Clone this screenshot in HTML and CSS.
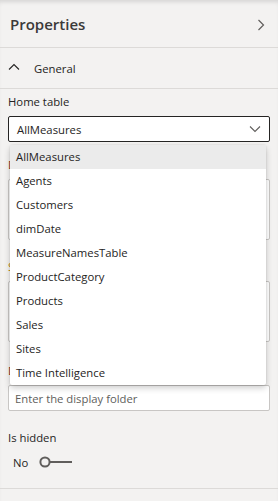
FILE: index.html
```html
<!DOCTYPE html>
<html lang="en">
  <head>
    <meta charset="UTF-8" />
    <title>Properties</title>
    <link rel="stylesheet" href="styles.css">
  </head>
  <body>
    <div class="panel">
      <div class="panel-header">
        <h2>Properties</h2>
        <svg class="chev-right" width="8" height="12" viewBox="0 0 8 12">
          <path d="M1.5 1 L6.5 6 L1.5 11" fill="none" stroke="#605e5c" stroke-width="1.2" />
        </svg>
      </div>

      <div class="section-head">
        <svg class="chev-up" width="12" height="8" viewBox="0 0 12 8">
          <path d="M1 6.5 L6 1.5 L11 6.5" fill="none" stroke="#252423" stroke-width="1.1" />
        </svg>
        <span>General</span>
      </div>

      <div class="fields">
        <div class="field home">
          <label>Home table</label>
          <div class="select">
            <span>AllMeasures</span>
            <svg width="12" height="8" viewBox="0 0 12 8">
              <path d="M1 1.5 L6 6.5 L11 1.5" fill="none" stroke="#605e5c" stroke-width="1.1" />
            </svg>
          </div>

          <ul class="dropdown">
            <li class="selected">AllMeasures</li>
            <li>Agents</li>
            <li>Customers</li>
            <li>dimDate</li>
            <li>MeasureNamesTable</li>
            <li>ProductCategory</li>
            <li>Products</li>
            <li>Sales</li>
            <li>Sites</li>
            <li>Time Intelligence</li>
          </ul>
        </div>

        <div class="field">
          <label class="warn">Description</label>
          <div class="textarea"></div>
        </div>

        <div class="field synonyms">
          <label class="warn2">Synonyms</label>
          <div class="textarea"></div>
        </div>

        <div class="field">
          <label class="warn">Display folder</label>
          <div class="input">Enter the display folder</div>
        </div>

        <div class="field">
          <label>Is hidden</label>
          <div class="toggle-row">
            <span>No</span>
            <svg width="36" height="14" viewBox="0 0 36 14">
              <circle cx="6" cy="7" r="4.6" fill="none" stroke="#605e5c" stroke-width="2" />
              <line x1="10.5" y1="7" x2="33" y2="7" stroke="#605e5c" stroke-width="2" />
            </svg>
          </div>
        </div>
      </div>
      <div class="bottom-line"></div>
    </div>
  </body>
</html>
```

FILE: styles.css
```css
body {
  margin: 0;
  padding: 0;
  background-color: #f3f2f1;
  font-family: "Open Sans", "Noto Sans", sans-serif;
  color: #252423;
}
.panel {
  width: 278px;
  height: 501px;
  box-shadow: inset 0 4px 4px -2px rgba(0, 0, 0, 0.12);
  overflow: hidden;
}
.panel-header {
  display: flex;
  align-items: center;
  justify-content: space-between;
  padding: 0 13px 0 10px;
  border-bottom: 1px solid #dcdad8;
  box-sizing: border-box;
  height: 48px;
}
.panel-header h2 {
  margin: 0;
  font-size: 15px;
  font-weight: 600;
  color: #3b3a39;
  padding-top: 1px;
}
.chev-right {
  margin-top: 2px;
}
.section-head {
  height: 41px;
  display: flex;
  align-items: center;
  gap: 14px;
  padding-left: 8px;
  font-size: 11.3px;
  border-bottom: 1px solid #dcdad8;
  box-sizing: border-box;
}
.chev-up {
  margin-top: -3px;
}
.fields {
  padding: 5px 8px 0 8px;
}
.field {
  position: relative;
  margin-bottom: 19px;
}
.field.home {
  margin-bottom: 15px;
}
.field.synonyms {
  margin-bottom: 21px;
}
.field label {
  display: block;
  font-size: 11.3px;
  line-height: 16px;
  margin-bottom: 6px;
}
.field label.warn {
  color: #8a3b1f;
}
.field label.warn2 {
  color: #b8860b;
}
.select {
  height: 26px;
  box-sizing: border-box;
  border: 1px solid #252423;
  border-radius: 2px;
  background-color: #ffffff;
  display: flex;
  align-items: center;
  justify-content: space-between;
  padding: 0 8px 0 8px;
  font-size: 11.3px;
}
.textarea {
  height: 61px;
  box-sizing: border-box;
  border: 1px solid #c8c6c4;
  border-radius: 2px;
  background-color: #ffffff;
}
.input {
  height: 26px;
  box-sizing: border-box;
  border: 1px solid #c8c6c4;
  border-radius: 2px;
  background-color: #ffffff;
  font-size: 11.3px;
  color: #605e5c;
  padding: 0 6px;
  display: flex;
  align-items: center;
}
.toggle-row {
  display: flex;
  align-items: center;
  gap: 11px;
  padding-left: 5px;
  font-size: 11.3px;
  height: 14px;
  margin-top: 9px;
}
.dropdown {
  position: absolute;
  top: 51px;
  left: 2px;
  width: 256px;
  margin: 0;
  padding: 0;
  list-style: none;
  background-color: #ffffff;
  border-radius: 2px;
  box-shadow: 0 3px 6px rgba(0, 0, 0, 0.2), 0 0 2px rgba(0, 0, 0, 0.12);
  z-index: 2;
}
.dropdown li {
  height: 24px;
  line-height: 24px;
  padding-left: 6px;
  font-size: 11.3px;
  color: #252423;
}
.dropdown li.selected {
  background-color: #ebebeb;
}
.bottom-line {
  border-top: 1px solid #dcdad8;
}
```
